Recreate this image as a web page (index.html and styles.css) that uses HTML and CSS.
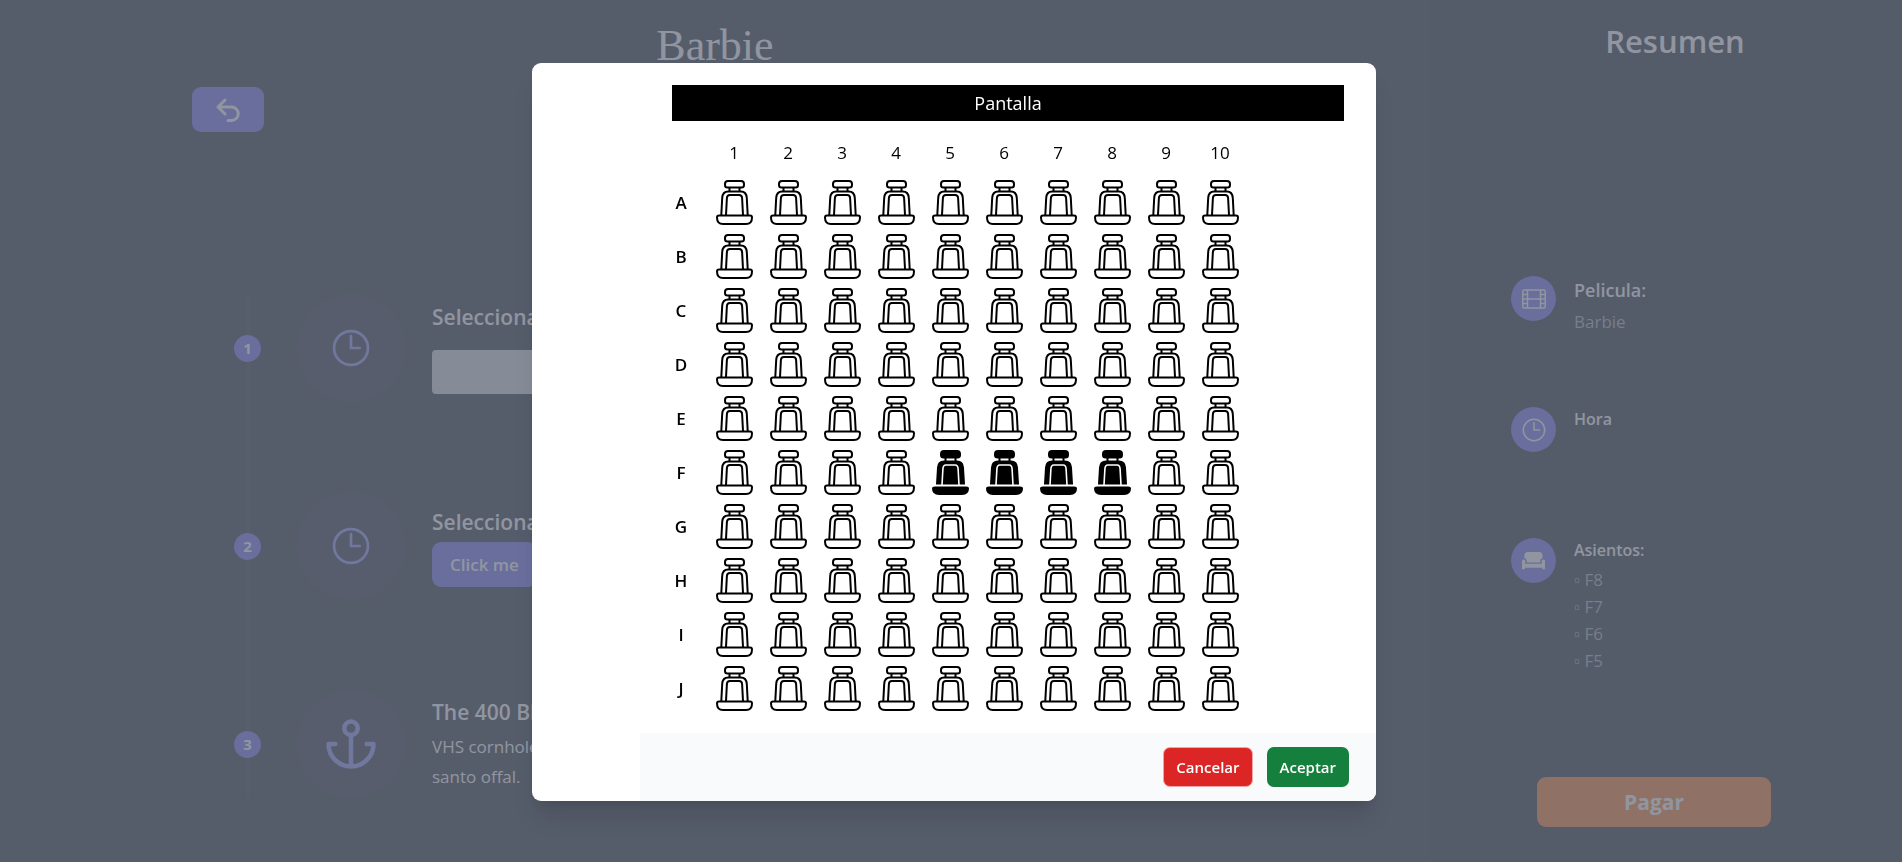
FILE: index.html
```html
<!DOCTYPE html>
<html lang="es">
<head>
<meta charset="utf-8">
<meta name="viewport" content="width=device-width, initial-scale=1">
<title>Barbie</title>
<link rel="stylesheet" href="styles.css">
</head>
<body>
<svg class="sprite" aria-hidden="true">
  <symbol id="seat" viewBox="0 0 37 45">
    <g fill="none" stroke="#000" stroke-width="2" stroke-linejoin="round">
      <path d="M12 1h13q3 0 3 3v1q0 2.500-2.500 2.500h-14Q9 7.500 9 5V4q0-3 3-3z"/>
      <path d="M13.500 7.500v4M23.500 7.500v4"/>
      <path d="M5.300 35l.9-17q.4-6.500 6-6.500h12.600q5.600 0 6 6.500l.9 17"/>
      <path d="M10 35l.9-17q.2-3 3-3h9.200q2.800 0 3 3l.9 17"/>
      <path d="M3 35.500h31q2 0 2 2 0 6.500-6 6.500H7q-6 0-6-6.500 0-2 2-2z"/>
    </g>
  </symbol>
  <symbol id="seat-taken" viewBox="0 0 37 45">
    <path d="M12 0h13q4 0 4 4v1q0 3.500-3.500 3.500h-14Q8 8.500 8 5V4q0-4 4-4z"/>
    <path d="M13.500 8v4M23.500 8v4" stroke="#000" stroke-width="2"/>
    <path d="M4 34.500l1-17q.5-7 7-7h13q6.500 0 7 7l1 17z"/>
    <path d="M10 35l.9-16q.2-4 3-4h9.200q2.800 0 3 4l.9 16" fill="none" stroke="#fff" stroke-width="1.600"/>
    <path d="M3 36.500h31q3 0 3 2 0 6.500-7 6.500H7q-7 0-7-6.500 0-2 3-2z"/>
  </symbol>
  <symbol id="clock" viewBox="0 0 24 24">
    <circle cx="12" cy="12" r="10.700" fill="none" stroke="currentColor"/>
    <path d="M12 4.500V12h5.500" fill="none" stroke="currentColor" stroke-linecap="round"/>
  </symbol>
</svg>

<div class="page">
  <main class="booking">
    <h1 class="movie-title">Barbie</h1>
    <button class="back" type="button" aria-label="Volver">
      <svg viewBox="0 0 24 24" width="24" height="24" fill="none" stroke="currentColor" stroke-width="3" stroke-linecap="round" stroke-linejoin="round"><path d="M9 2L2 9l7 7M2 9h13.500a6.500 6.500 0 0 1 0 13.500H12"/></svg>
    </button>
    <ol class="steps">
      <li class="step">
        <span class="step-number">1</span>
        <span class="step-icon"><svg width="38" height="38" stroke-width="1.700"><use href="#clock"/></svg></span>
        <div class="step-body step-form">
          <label class="step-title" for="hour">Selecciona la hora</label>
          <input class="hour" id="hour" type="text">
        </div>
      </li>
      <li class="step">
        <span class="step-number">2</span>
        <span class="step-icon"><svg width="38" height="38" stroke-width="1.700"><use href="#clock"/></svg></span>
        <div class="step-body">
          <h2 class="step-title">Selecciona los asientos</h2>
          <button class="open-seats" type="button">Click me</button>
        </div>
      </li>
      <li class="step">
        <span class="step-number">3</span>
        <span class="step-icon"><svg width="54" height="54" viewBox="0 0 24 24" fill="none" stroke="currentColor" stroke-width="2" stroke-linecap="round" stroke-linejoin="round"><circle cx="12" cy="5" r="3"/><path d="M12 22V8M5 12H2a10 10 0 0 0 20 0h-3"/></svg></span>
        <div class="step-body">
          <h2 class="step-title">The 400 Blows</h2>
          <p class="step-text">VHS cornhole pop-up, try-hard 8-bit iceland helvetica. Kinfolk bespoke try-hard cliche palo<br>santo offal.</p>
        </div>
      </li>
    </ol>
  </main>

  <aside class="summary">
    <h2 class="summary-title">Resumen</h2>
    <div class="facts">
      <section class="fact">
        <span class="fact-icon"><svg width="24" height="24" viewBox="0 0 24 24" fill="none" stroke="currentColor" stroke-width="1.500"><rect x="0.800" y="3" width="22.400" height="18" rx="1.500"/><path d="M5.500 3v18M18.500 3v18M5.500 12h13M1 7.500h4.500M1 12h4.500M1 16.500h4.500M18.500 7.500H23M18.500 12H23M18.500 16.500H23"/></svg></span>
        <div><h3 class="fact-name fact-name-large">Pelicula:</h3><p class="fact-value">Barbie</p></div>
      </section>
      <section class="fact">
        <span class="fact-icon"><svg width="24" height="24" stroke-width="1.500"><use href="#clock"/></svg></span>
        <div><h3 class="fact-name">Hora</h3></div>
      </section>
      <section class="fact">
        <span class="fact-icon"><svg width="23" height="23" viewBox="0 0 24 24" fill="currentColor"><path d="M6 3h12q3.500 0 3.500 4v2.500Q19 10 19 12.500V14H5v-1.500Q5 10 2.500 9.500V7Q2.500 3 6 3z"/><path d="M0 12.500Q0 11 1.700 11t1.700 1.500v3h17.200v-3q0-1.500 1.700-1.500t1.700 1.500V21h-3v-1.500H3V21H0z"/></svg></span>
        <div>
          <h3 class="fact-name">Asientos:</h3>
          <ul class="chosen"><li>▫ F8</li><li>▫ F7</li><li>▫ F6</li><li>▫ F5</li></ul>
        </div>
      </section>
    </div>
    <button class="pay" type="button">Pagar</button>
  </aside>
</div>

<div class="overlay">
  <div class="dialog" role="dialog" aria-modal="true" aria-label="Asientos">
    <div class="dialog-main">
      <div class="room">
        <div class="screen">Pantalla</div>
        <div class="seats" id="seats"></div>
      </div>
      <div class="actions">
        <button class="action cancel" type="button">Cancelar</button>
        <button class="action accept" type="button">Aceptar</button>
      </div>
    </div>
  </div>
</div>
<script src="seats.js"></script>
</body>
</html>
```
FILE: styles.css
```css
* { box-sizing: border-box; }
body, h1, h2, h3, p, ul, ol { margin: 0; padding: 0; }
ul, ol { list-style: none; }
body {
  font-family: "Segoe UI", "Open Sans", "Noto Sans", sans-serif;
  font-size: 17px;
  line-height: 27px;
  color: #fff;
  background: #111827;
}
button { font: inherit; color: inherit; border: 0; padding: 0; cursor: pointer; }
svg { display: block; }
.sprite { position: absolute; width: 0; height: 0; }

.page { display: flex; min-height: 100vh; }
.booking { flex: 1; min-width: 0; overflow: hidden; background: #161c28; }
.movie-title {
  padding-top: 22px;
  font-family: Georgia, "Liberation Serif", serif;
  font-size: 44px;
  font-weight: 400;
  line-height: 48px;
  text-align: center;
}
.back {
  display: flex;
  align-items: center;
  justify-content: center;
  width: 72px;
  height: 45px;
  margin: 17px 0 0 192px;
  border-radius: 9px;
  background: #6366f1;
}
.steps { margin: 162px 192px 0 234px; }
.step { display: flex; align-items: center; height: 108px; margin-bottom: 90px; position: relative; }
.step::before {
  content: "";
  position: absolute;
  left: 12px;
  top: 0;
  width: 4px;
  height: 198px;
  background: #1f2937;
}
.step:last-child { margin-bottom: 0; }
.step:last-child::before { height: 108px; }
.step-number {
  position: relative;
  flex: none;
  width: 27px;
  border-radius: 50%;
  background: #6366f1;
  font-size: 15px;
  font-weight: 700;
  text-align: center;
}
.step-icon {
  flex: none;
  display: grid;
  place-items: center;
  width: 108px;
  height: 108px;
  margin: 0 27px 0 36px;
  border-radius: 50%;
  background: #1c2333;
  color: #818cf8;
}
.step-body { flex: 1; min-width: 0; }
.step-title { display: block; margin-bottom: 4px; font-size: 21px; font-weight: 600; line-height: 32px; white-space: nowrap; }
.step-form { display: flex; flex-direction: column; gap: 17px; align-items: flex-start; padding-bottom: 2px; }
.step-form .step-title { margin: 0; }
.hour { width: 240px; height: 44px; border: 0; border-radius: 4px; background: #d1d5db; }
.open-seats {
  display: block;
  height: 45px;
  padding: 0 18px;
  border-radius: 9px;
  background: #6366f1;
  font-weight: 600;
}
.step-text { line-height: 30px; white-space: nowrap; }

.summary { flex: none; width: 472px; display: flex; flex-direction: column; padding: 20px 81px 35px; background: #111827; }
.summary-title { padding-left: 18px; font-size: 31px; font-weight: 600; line-height: 42px; text-align: center; }
.facts { display: grid; gap: 36px; margin-top: 214px; }
.fact { display: flex; align-items: flex-start; gap: 18px; min-height: 95px; }
.fact-icon {
  flex: none;
  display: grid;
  place-items: center;
  width: 45px;
  height: 45px;
  border-radius: 50%;
  background: #6366f1;
}
.fact-name { margin-bottom: 4px; font-size: 16px; font-weight: 600; line-height: 24px; }
.fact-name-large { font-size: 18px; line-height: 28px; }
.fact-value, .chosen { color: #9ca3af; }
.pay {
  align-self: center;
  width: 234px;
  height: 50px;
  margin: auto 24px 0 0;
  border-radius: 9px;
  background: #f97316;
  font-size: 21px;
  font-weight: 700;
}

.overlay {
  position: fixed;
  inset: 0;
  display: grid;
  place-items: center;
  padding: 2px 0 0 6px;
  background: rgba(107, 114, 128, 0.75);
}
.dialog {
  width: 844px;
  padding-left: 108px;
  overflow: hidden;
  border-radius: 9px;
  background: #fff;
  box-shadow: 0 20px 25px -5px rgba(0, 0, 0, 0.1), 0 8px 10px -6px rgba(0, 0, 0, 0.1);
  color: #000;
}
.room { padding: 22px 32px 18px; }
.screen { background: #000; color: #fff; font-size: 18px; line-height: 36px; text-align: center; }
.seats { display: grid; grid-template-columns: 35px repeat(10, 54px); margin-top: 9px; }
.seats > * { height: 54px; display: grid; place-items: center; }
.seats > .column { height: 45px; padding-bottom: 1px; }
.seats > .seat-row { padding-right: 17px; font-weight: 600; }
.seat { background: none; }
.actions { display: flex; justify-content: flex-end; align-items: center; gap: 14px; padding: 14px 27px; background: #f9fafb; }
.action { height: 40px; padding: 0 13px; border-radius: 7px; color: #fff; font-size: 15px; font-weight: 600; }
.cancel { background: #dc2626; border: 1px solid #f3a5a5; padding: 0 12px; }
.accept { background: #15803d; }
```
FILE: seats.js
```js
const grid = document.getElementById("seats");
const taken = ["F5", "F6", "F7", "F8"];
let html = '<span class="column"></span>';
for (let n = 1; n <= 10; n++) html += `<span class="column">${n}</span>`;
for (const row of "ABCDEFGHIJ") {
  html += `<span class="seat-row">${row}</span>`;
  for (let n = 1; n <= 10; n++) {
    const icon = taken.includes(row + n) ? "seat-taken" : "seat";
    html += `<button class="seat" type="button" aria-label="${row}${n}"><svg width="37" height="45"><use href="#${icon}"/></svg></button>`;
  }
}
grid.innerHTML = html;
```
